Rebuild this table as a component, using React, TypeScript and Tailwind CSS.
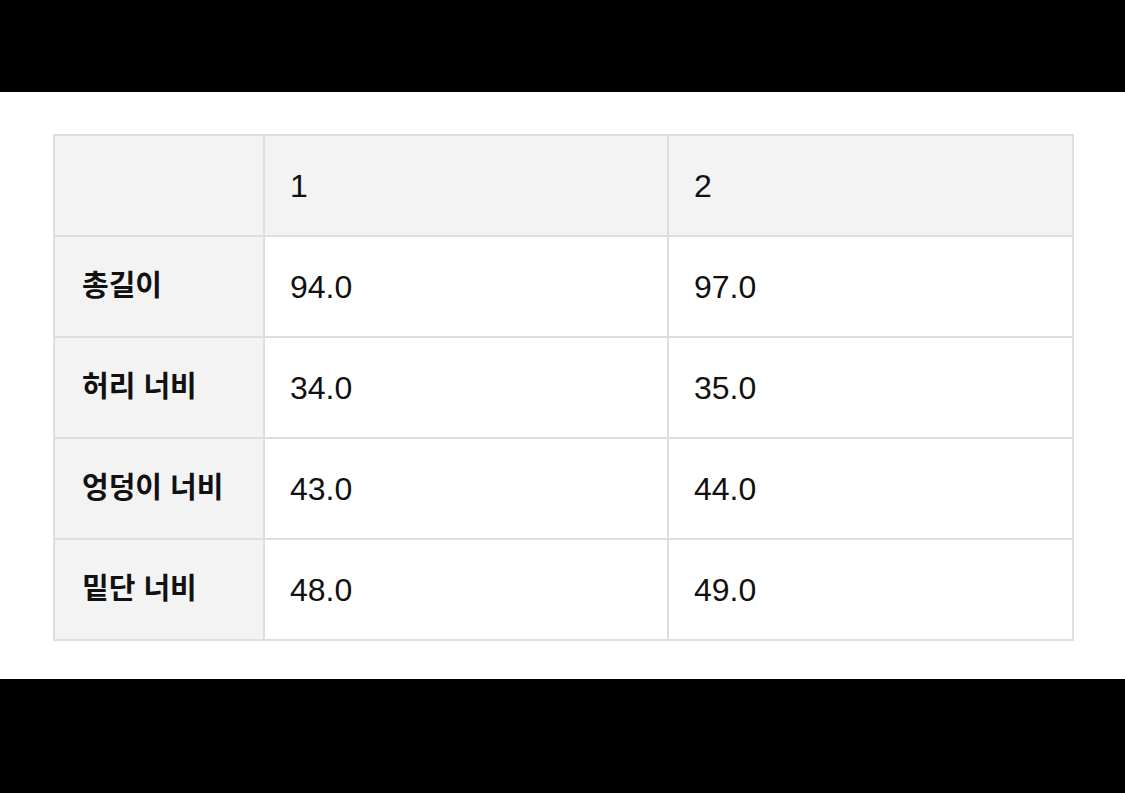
import React from "react"

const rows = [
  { label: "총길이", a: "94.0", b: "97.0" },
  { label: "허리 너비", a: "34.0", b: "35.0" },
  { label: "엉덩이 너비", a: "43.0", b: "44.0" },
  { label: "밑단 너비", a: "48.0", b: "49.0" },
]

export default function App() {
  return (
    <div
      className="flex h-[793px] w-[1125px] flex-col bg-black"
      style={{ fontFamily: '"Liberation Sans", "Noto Sans CJK KR", sans-serif' }}
    >
      <div className="h-[92px] shrink-0" />
      <div className="h-[587px] shrink-0 bg-white pl-[53px] pt-[42px]">
        <table className="w-[1019px] table-fixed border-collapse text-[#111]">
          <colgroup>
            <col className="w-[210px]" />
            <col className="w-[404px]" />
            <col className="w-[405px]" />
          </colgroup>
          <tbody>
            <tr className="h-[101px] bg-[#f3f3f3]">
              <td className="border-2 border-[#dedede]" />
              <td className="border-2 border-[#dedede] pl-[25px] text-[32px]">1</td>
              <td className="border-2 border-[#dedede] pl-[25px] text-[32px]">2</td>
            </tr>
            {rows.map((r) => (
              <tr key={r.label} className="h-[101px]">
                <td className="border-2 border-[#dedede] bg-[#f3f3f3] pl-[27px] text-[29px] font-semibold">
                  {r.label}
                </td>
                <td className="border-2 border-[#dedede] pl-[25px] text-[32px]">{r.a}</td>
                <td className="border-2 border-[#dedede] pl-[25px] text-[32px]">{r.b}</td>
              </tr>
            ))}
          </tbody>
        </table>
      </div>
      <div className="flex-1" />
    </div>
  )
}
